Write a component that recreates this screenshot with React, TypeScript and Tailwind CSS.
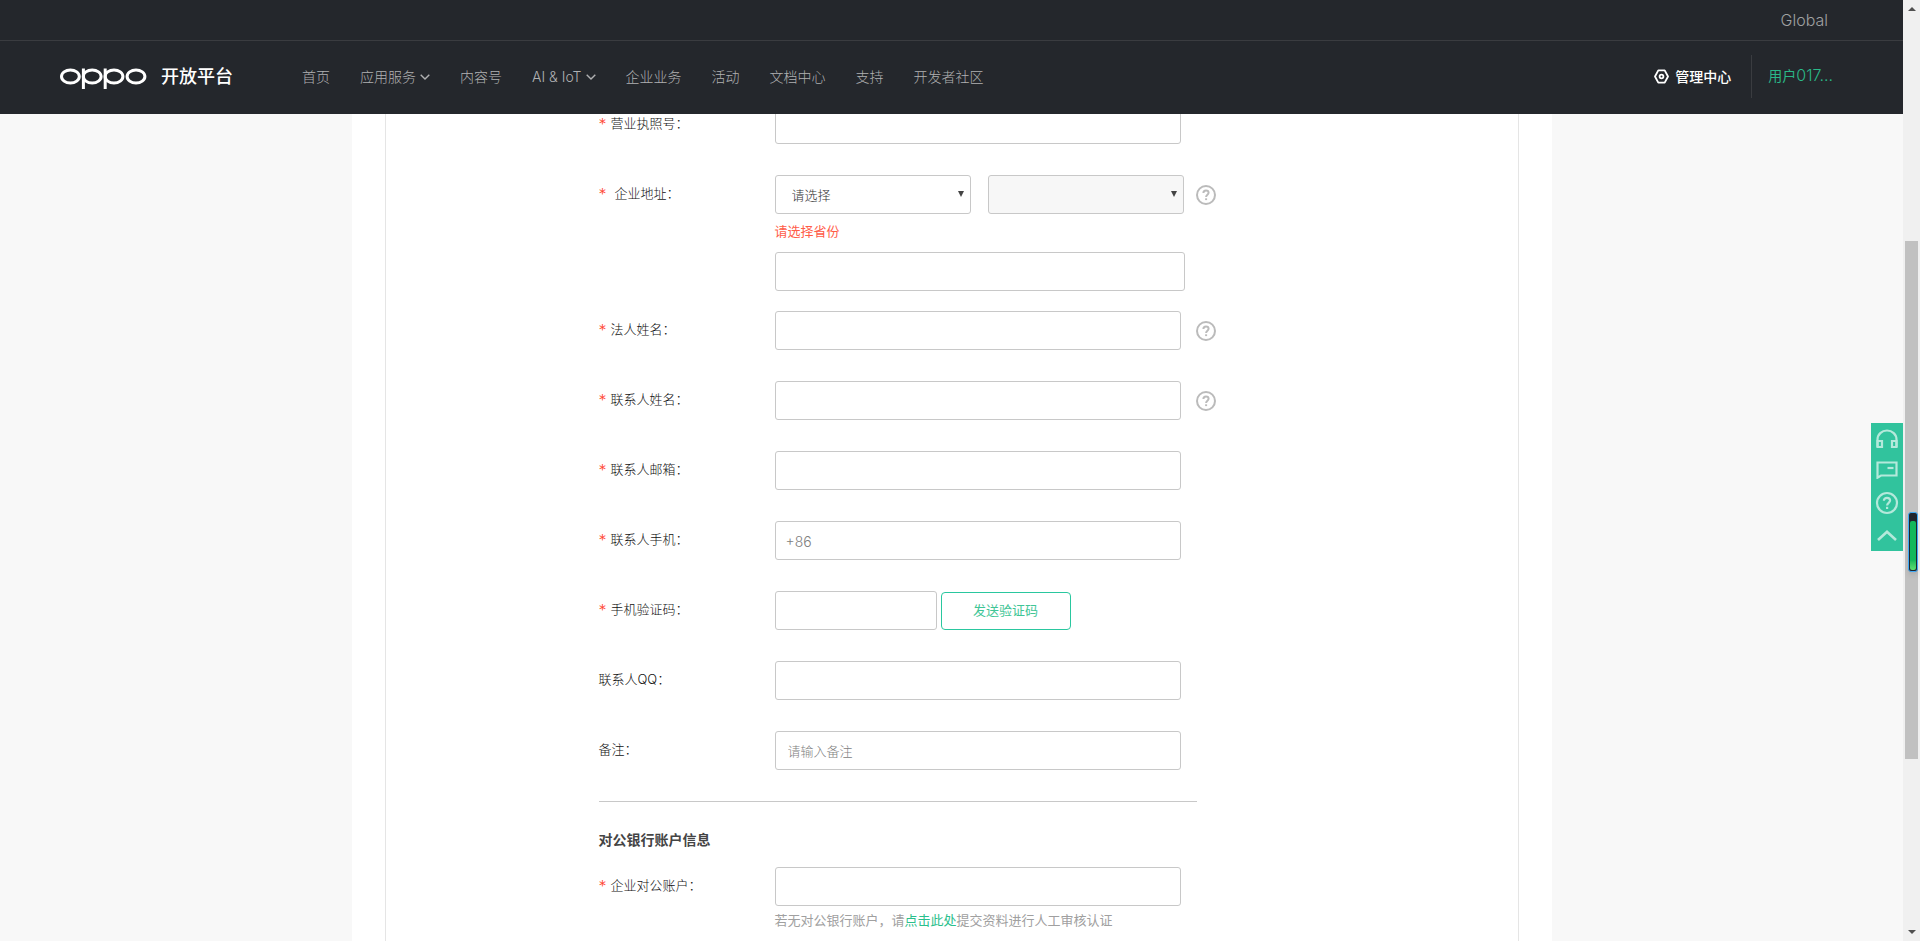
import React from 'react';

interface NavItem {
  label: string;
  hasMenu?: boolean;
}

interface FieldProps {
  id: string;
  label: string;
  required?: boolean;
  help?: boolean;
  wideGap?: boolean;
  children?: React.ReactNode;
}

const navItems: NavItem[] = [
  { label: '首页' },
  { label: '应用服务', hasMenu: true },
  { label: '内容号' },
  { label: 'AI & IoT', hasMenu: true },
  { label: '企业业务' },
  { label: '活动' },
  { label: '文档中心' },
  { label: '支持' },
  { label: '开发者社区' },
];

const inputBase =
  'h-[39px] rounded-[3px] border border-[#c8c8c8] bg-white text-[#333] placeholder:text-[#808080] focus:outline-none focus:border-[#2ac79f]';

function Logo() {
  return (
    <svg width="88" height="22" viewBox="0 0 88 22" fill="none" stroke="#fff" strokeWidth="3" aria-label="oppo">
      <ellipse cx="10.4" cy="8.5" rx="8.9" ry="6.6" />
      <ellipse cx="32.2" cy="8.5" rx="8.9" ry="6.6" />
      <ellipse cx="54" cy="8.5" rx="8.9" ry="6.6" />
      <ellipse cx="76" cy="8.5" rx="8.9" ry="6.6" />
      <line x1="23.4" y1="0.5" x2="23.4" y2="21" />
      <line x1="45.2" y1="0.5" x2="45.2" y2="21" />
    </svg>
  );
}

function HelpButton() {
  return (
    <button type="button" aria-label="帮助" className="flex h-[39px] items-center text-[#bbb]">
      <svg width="20" height="20" viewBox="0 0 20 20" fill="none" stroke="currentColor" strokeWidth="2">
        <circle cx="10" cy="10" r="9" />
        <path d="M7.4 8.1C7.4 6.4 8.5 5.4 10 5.4s2.6 1 2.6 2.4c0 1.8-2.5 2-2.5 4.1" />
        <path d="M10.1 13.3v1.8" />
      </svg>
    </button>
  );
}

function Field({ id, label, required, help, wideGap, children }: FieldProps) {
  return (
    <div className="flex items-start">
      <label htmlFor={id} className="flex w-44 shrink-0 text-[13px] leading-[37px] text-[#111]">
        {required && <span className={`${wideGap ? 'w-4' : 'w-3'} text-base leading-[39px] text-[#ff4632]`}>*</span>}
        {label}：
      </label>
      {children ?? <input id={id} type="text" className={`${inputBase} w-[406px] px-3 text-[13px]`} />}
      {help && (
        <div className="ml-[15px]">
          <HelpButton />
        </div>
      )}
    </div>
  );
}

function Header() {
  return (
    <header className="absolute inset-x-0 top-0 z-10 bg-[#24272c]">
      <div className="flex h-[41px] items-center justify-end border-b border-[#3a3c40] pr-[75px]">
        <a href="#" className="text-base text-[#a0a1a2]">
          Global
        </a>
      </div>
      <div className="flex h-[73px] items-center pb-0.5 pl-[60px] pr-[70px]">
        <a href="#" className="flex items-center gap-[13px] text-white">
          <span className="pt-1">
            <Logo />
          </span>
          <span className="text-lg leading-6 font-medium">开放平台</span>
        </a>
        <nav className="ml-[69px] flex gap-[30px] text-sm text-[#b0b1b2]">
          {navItems.map((item) => (
            <a key={item.label} href="#" className="flex items-center gap-1 whitespace-nowrap">
              {item.label}
              {item.hasMenu && (
                <svg width="10" height="6" viewBox="0 0 10 6" fill="none" stroke="currentColor" strokeWidth="1.4">
                  <path d="M0.7 0.7L5 5l4.3-4.3" />
                </svg>
              )}
            </a>
          ))}
        </nav>
        <div className="flex-1" />
        <a href="#" className="flex items-center gap-1.5 text-sm font-medium text-white">
          <svg width="15" height="15" viewBox="0 0 15 15" fill="none" stroke="currentColor" strokeWidth="1.8">
            <path d="M4.3 1.3h6.4L14 7.5l-3.3 6.2H4.3L1 7.5z" strokeLinejoin="round" />
            <circle cx="7.5" cy="7.5" r="1.9" />
          </svg>
          管理中心
        </a>
        <div className="ml-5 mr-4 h-[43px] w-px bg-[#3a3c40]" />
        <a href="#" className="pb-0.5 text-sm leading-6 font-normal text-[#2ab888]">
          用户<span className="text-base leading-6 font-light">017...</span>
        </a>
      </div>
    </header>
  );
}

function CompanyForm() {
  return (
    <form className="ml-[213px] flex w-[620px] flex-col gap-[31px] pt-[105px]">
      <Field id="license" label="营业执照号" required />

      <Field id="province" label="企业地址" required wideGap>
        <div>
          <div className="flex">
            <div className="relative">
              <select id="province" className={`${inputBase} w-[196px] appearance-none px-4 pt-0.5 text-[13px]`}>
                <option>请选择</option>
              </select>
              <span className="pointer-events-none absolute top-4 right-[7px] border-x-[3px] border-t-[6px] border-x-transparent border-t-[#444]" />
            </div>
            <div className="relative ml-[17px]">
              <select
                disabled
                aria-label="城市"
                className="h-[39px] w-[196px] appearance-none rounded-[3px] border border-[#c8c8c8] bg-[#f7f7f7] px-4 text-[13px]"
              />
              <span className="pointer-events-none absolute top-4 right-[7px] border-x-[3px] border-t-[6px] border-x-transparent border-t-[#444]" />
            </div>
            <div className="ml-3">
              <HelpButton />
            </div>
          </div>
          <p className="pt-1.5 pb-2.5 text-[13px] leading-[22px] font-normal text-[#ff5c48]">请选择省份</p>
          <input type="text" aria-label="详细地址" className={`${inputBase} block w-[410px] px-3 text-[13px]`} />
        </div>
      </Field>

      <div className="-mt-[11px]">
        <Field id="legal" label="法人姓名" required help />
      </div>
      <Field id="contact" label="联系人姓名" required help />
      <Field id="email" label="联系人邮箱" required />
      <Field id="phone" label="联系人手机" required>
        <input id="phone" type="tel" placeholder="+86" className={`${inputBase} w-[406px] px-2.5 pt-0.5 text-sm`} />
      </Field>
      <Field id="code" label="手机验证码" required>
        <div className="flex items-end gap-1">
          <input id="code" type="text" className={`${inputBase} w-[162px] px-3 text-[13px]`} />
          <button
            type="button"
            className="h-[38px] w-[130px] rounded border border-[#2ac79f] text-[13px] font-normal text-[#3fc596]"
          >
            发送验证码
          </button>
        </div>
      </Field>
      <Field id="qq" label="联系人QQ" />
      <Field id="remark" label="备注">
        <input
          id="remark"
          type="text"
          placeholder="请输入备注"
          className={`${inputBase} w-[406px] px-3 text-[13px]`}
        />
      </Field>

      <section className="w-[598px] border-t border-[#c8c8c8] pt-[25px]">
        <h2 className="mb-3.5 text-sm leading-[26px] font-bold text-[#444]">对公银行账户信息</h2>
        <Field id="account" label="企业对公账户" required />
        <p className="ml-44 pt-[3px] text-[13px] leading-[22px] font-normal text-[#a0a0a0]">
          若无对公银行账户，请
          <a href="#" className="text-[#2ac08c]">
            点击此处
          </a>
          提交资料进行人工审核认证
        </p>
      </section>
    </form>
  );
}

function SideTools() {
  const cell = 'flex h-8 w-8 items-center justify-center';
  return (
    <aside className="absolute top-[423px] right-0 z-10 bg-[#31c39d] text-[#b4e9db]">
      <button aria-label="客服" className={`${cell} pb-0.5`}>
        <svg width="22" height="19" viewBox="0 0 22 19" fill="none" stroke="currentColor" strokeWidth="2.2">
          <path d="M1.5 18v-7.5a9.5 9 0 0 1 19 0V18" />
          <path d="M1.5 12h4.5v6H1.5zM16 12h4.5v6H16z" />
        </svg>
      </button>
      <button aria-label="反馈" className={`${cell} pb-0.5`}>
        <svg width="22" height="18" viewBox="0 0 22 18" fill="none" stroke="currentColor" strokeWidth="2.2">
          <path d="M1.5 1.5h19v13H5l-3.5 2.2z" />
          <path d="M11.5 7h6" />
        </svg>
      </button>
      <button aria-label="帮助中心" className={cell}>
        <svg width="24" height="24" viewBox="0 0 24 24" fill="none" stroke="currentColor" strokeWidth="2.2">
          <circle cx="12" cy="12" r="10" />
          <path d="M8.9 9.8c0-1.9 1.4-3 3.1-3s3.1 1.1 3.1 2.8c0 2.1-3 2.4-3 4.8" />
          <path d="M12.1 15.8v2.2" />
        </svg>
      </button>
      <button aria-label="回到顶部" className={cell}>
        <svg width="20" height="11" viewBox="0 0 20 11" fill="none" stroke="currentColor" strokeWidth="2.6">
          <path d="M1 10l9-8.2L19 10" />
        </svg>
      </button>
    </aside>
  );
}

function ScrollTrack() {
  return (
    <div className="relative flex w-[17px] shrink-0 flex-col items-center bg-[#f0f0f0]">
      <span className="mt-[7px] border-x-[4px] border-b-[4px] border-x-transparent border-b-[#505050]" />
      <div className="min-h-0 grow-[230]" />
      <div className="w-[13px] grow-[518] bg-[#c1c1c1]" />
      <div className="min-h-0 grow-[171]" />
      <span className="mb-[7px] border-x-[4px] border-t-[4px] border-x-transparent border-t-[#505050]" />
      <div className="absolute top-[512px] right-[2px] h-[60px] w-[10px] rounded-[3px] border border-[#3fa9f5] bg-[#20242c] p-px pt-2 shadow-md">
        <div className="h-full rounded-[2px] bg-linear-to-b from-[#12b85a] from-80% to-[#5be070]" />
      </div>
    </div>
  );
}

export default function App() {
  return (
    <div className="flex h-screen overflow-hidden bg-[#f8f8f8] font-[Inter,'Noto_Sans_CJK_SC',sans-serif] font-light">
      <div className="relative min-w-0 flex-1 overflow-hidden">
        <Header />
        <main className="mx-auto max-w-[1200px] bg-white px-[33px]">
          <div className="h-screen overflow-hidden border-x border-[#e5e5e5]">
            <CompanyForm />
          </div>
        </main>
        <SideTools />
      </div>
      <ScrollTrack />
    </div>
  );
}
